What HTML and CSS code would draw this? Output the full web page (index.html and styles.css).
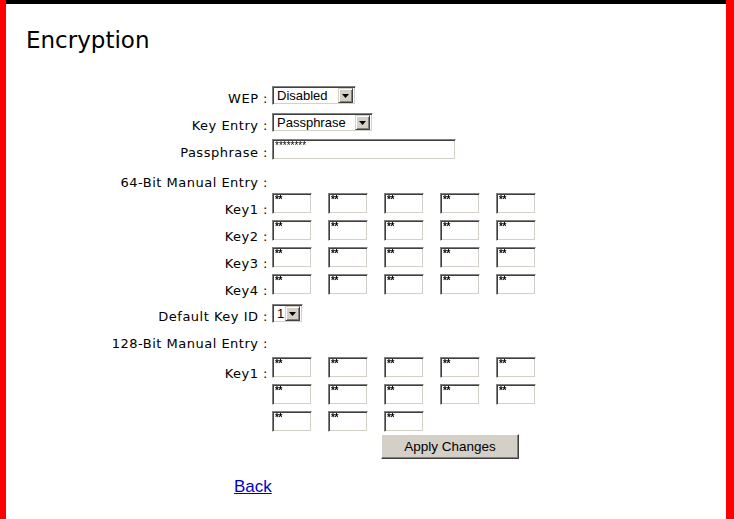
FILE: index.html
```html
<!DOCTYPE html>
<html lang="en">
<head>
  <meta charset="UTF-8">
  <title>Encryption</title>
  <link rel="stylesheet" href="styles.css">
</head>
<body>
<div class="frame">
  <div class="page">
    <h1 class="title">Encryption</h1>

    <form class="form" onsubmit="return false">
      <div class="row r-wep">
        <label class="label">WEP :</label>
        <div class="select w-wep"><span class="select-text">Disabled</span><span class="select-btn"><svg width="7" height="4" viewBox="0 0 7 4"><polygon points="0,0 7,0 3.5,4" fill="#000"/></svg></span></div>
      </div>
      <div class="row r-entry">
        <label class="label">Key Entry :</label>
        <div class="select w-entry"><span class="select-text">Passphrase</span><span class="select-btn"><svg width="7" height="4" viewBox="0 0 7 4"><polygon points="0,0 7,0 3.5,4" fill="#000"/></svg></span></div>
      </div>
      <div class="row r-pass">
        <label class="label">Passphrase :</label>
        <input class="box pass" type="text" value="********">
      </div>
      <div class="row r-head">
        <span class="label">64-Bit Manual Entry :</span>
      </div>
      <div class="row key-row first">
        <label class="label">Key1 :</label>
        <div class="keys">
          <input class="box key" value="**"><input class="box key" value="**"><input class="box key" value="**"><input class="box key" value="**"><input class="box key" value="**">
        </div>
      </div>
      <div class="row key-row">
        <label class="label">Key2 :</label>
        <div class="keys">
          <input class="box key" value="**"><input class="box key" value="**"><input class="box key" value="**"><input class="box key" value="**"><input class="box key" value="**">
        </div>
      </div>
      <div class="row key-row">
        <label class="label">Key3 :</label>
        <div class="keys">
          <input class="box key" value="**"><input class="box key" value="**"><input class="box key" value="**"><input class="box key" value="**"><input class="box key" value="**">
        </div>
      </div>
      <div class="row key-row">
        <label class="label">Key4 :</label>
        <div class="keys">
          <input class="box key" value="**"><input class="box key" value="**"><input class="box key" value="**"><input class="box key" value="**"><input class="box key" value="**">
        </div>
      </div>
      <div class="row r-default">
        <label class="label">Default Key ID :</label>
        <div class="select w-id"><span class="select-text">1</span><span class="select-btn"><svg width="7" height="4" viewBox="0 0 7 4"><polygon points="0,0 7,0 3.5,4" fill="#000"/></svg></span></div>
      </div>
      <div class="row r-head2">
        <span class="label">128-Bit Manual Entry :</span>
      </div>
      <div class="row key-row first">
        <label class="label">Key1 :</label>
        <div class="keys">
          <input class="box key" value="**"><input class="box key" value="**"><input class="box key" value="**"><input class="box key" value="**"><input class="box key" value="**">
          <input class="box key" value="**"><input class="box key" value="**"><input class="box key" value="**"><input class="box key" value="**"><input class="box key" value="**">
          <input class="box key" value="**"><input class="box key" value="**"><input class="box key" value="**">
        </div>
      </div>
      <div class="row r-apply">
        <span class="label"></span>
        <button class="apply" type="button">Apply Changes</button>
      </div>
    </form>

    <div class="back-row"><a href="#" class="back">Back</a></div>
  </div>
</div>
</body>
</html>
```

FILE: styles.css
```css
html, body {
  margin: 0;
  padding: 0;
}
body {
  background: #fff;
  font-family: 'DejaVu Sans', Verdana, sans-serif;
  color: #000;
}
.frame {
  border-left: 6px solid #ff0000;
  border-right: 8px solid #ff0000;
  min-height: 100vh;
  box-sizing: border-box;
}
.page {
  border-top: 4px solid #000;
  padding: 22px 20px 20px 20px;
}
.title {
  margin: 0;
  font-size: 23px;
  font-weight: normal;
  line-height: 28px;
}

.form {
  display: flex;
  flex-direction: column;
  margin: 0;
}
.row {
  display: flex;
  align-items: center;
}
.label {
  width: 242px;
  flex: none;
  margin-right: 4px;
  padding-top: 3px;
  margin-bottom: -3px;
  text-align: right;
  font-size: 13px;
  letter-spacing: 0.5px;
  line-height: 15px;
}
.r-wep { margin-top: 32px; }
.r-entry { margin-top: 8px; }
.r-pass { margin-top: 7px; }
.r-head { margin-top: 12px; height: 20px; }
.r-head .label, .r-head2 .label { padding-top: 0; margin-bottom: 0; }
.key-row { align-items: flex-start; margin-top: 6px; }
.key-row.first { margin-top: 1px; }
.key-row .label { padding-top: 9px; margin-bottom: -9px; }
.r-default { margin-top: 9px; }
.r-head2 { margin-top: 10px; height: 20px; }
.r-head2 + .key-row.first { margin-top: 4px; }
.r-apply { margin-top: 2px; }

/* windows style sunken field */
.box, .select {
  box-sizing: border-box;
  background: #fff;
  border-top: 1px solid #808080;
  border-left: 1px solid #808080;
  border-right: 1px solid #fff;
  border-bottom: 1px solid #fff;
  box-shadow: inset 1px 1px 0 #404040, inset -1px -1px 0 #d4d0c8;
}
.box {
  height: 21px;
  margin: 0;
  padding: 0 2px 8px 2px;
  font-family: 'Liberation Sans', Arial, sans-serif;
  font-size: 10px;
  font-weight: bold;
  color: #000;
  outline: none;
  will-change: transform;
}
.pass { width: 184px; font-weight: normal; }
.keys {
  display: grid;
  grid-template-columns: repeat(5, 40px);
  column-gap: 16px;
  row-gap: 6px;
}
.key { width: 40px; letter-spacing: -0.5px; }

.select {
  display: inline-flex;
  align-items: center;
  justify-content: space-between;
  height: 19px;
  padding: 2px;
  font-family: 'Liberation Sans', Arial, sans-serif;
  font-size: 13px;
}
.w-wep { width: 84px; }
.w-entry { width: 101px; }
.w-id { width: 31px; }
.select-text {
  padding-left: 2px;
  line-height: 15px;
}
.select-btn {
  display: flex;
  align-items: center;
  justify-content: center;
  width: 15px;
  height: 15px;
  box-sizing: border-box;
  background: #d4d0c8;
  border-top: 1px solid #d4d0c8;
  border-left: 1px solid #d4d0c8;
  border-right: 1px solid #404040;
  border-bottom: 1px solid #404040;
  box-shadow: inset 1px 1px 0 #fff, inset -1px -1px 0 #808080;
}

.apply {
  margin: 0 0 0 109px;
  width: 138px;
  height: 25px;
  padding: 0;
  background: #d4d0c8;
  font-family: 'Liberation Sans', Arial, sans-serif;
  font-size: 13.5px;
  color: #000;
  border-top: 1px solid #fff;
  border-left: 1px solid #fff;
  border-right: 1px solid #404040;
  border-bottom: 1px solid #404040;
  box-shadow: inset -1px -1px 0 #808080;
}

.back-row {
  margin-top: 18px;
  padding-left: 208px;
  line-height: 20px;
}
.back {
  font-family: 'Liberation Sans', Arial, sans-serif;
  font-size: 17px;
  color: #0000cc;
}
```
